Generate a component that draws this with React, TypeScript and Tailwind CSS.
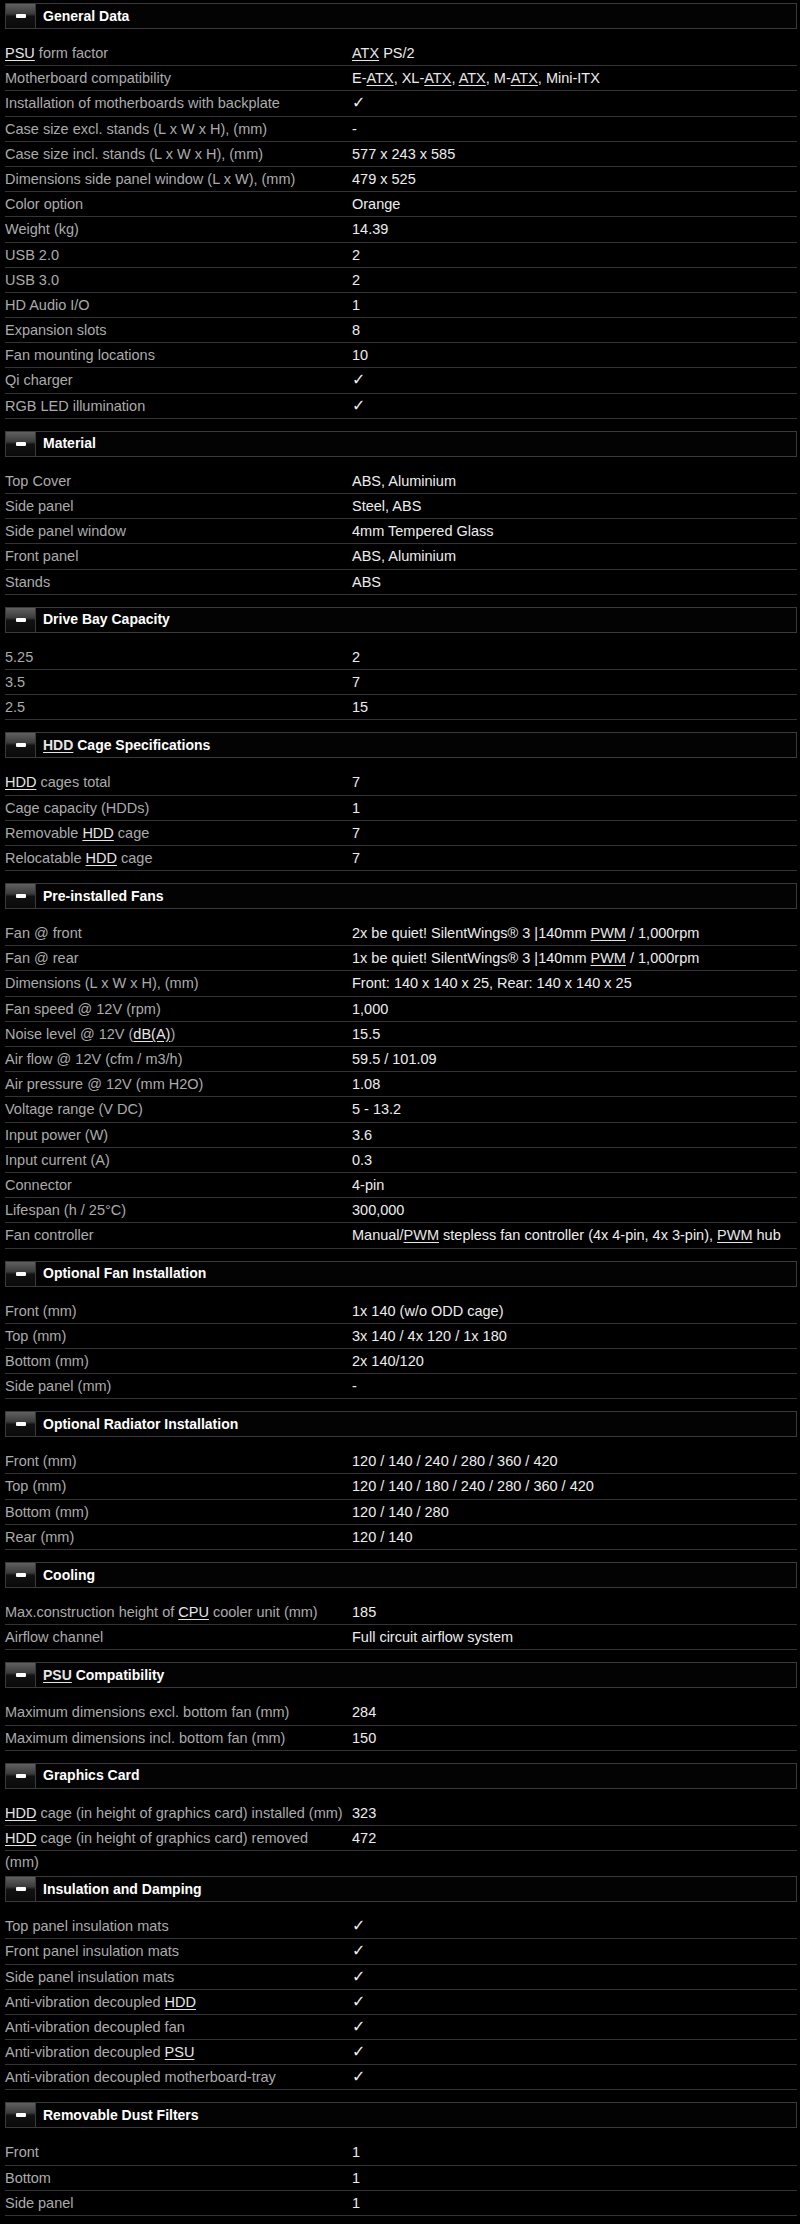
import React from 'react';

type Row = [string, string];
type Section = { title: string; rows: Row[]; extra?: boolean };

// [XYZ] marks an underlined abbreviation, \n forces a line break
const sections: Section[] = [
  {
    title: 'General Data',
    rows: [
      ['[PSU] form factor', '[ATX] PS/2'],
      ['Motherboard compatibility', 'E-[ATX], XL-[ATX], [ATX], M-[ATX], Mini-ITX'],
      ['Installation of motherboards with backplate', '✓'],
      ['Case size excl. stands (L x W x H), (mm)', '-'],
      ['Case size incl. stands (L x W x H), (mm)', '577 x 243 x 585'],
      ['Dimensions side panel window (L x W), (mm)', '479 x 525'],
      ['Color option', 'Orange'],
      ['Weight (kg)', '14.39'],
      ['USB 2.0', '2'],
      ['USB 3.0', '2'],
      ['HD Audio I/O', '1'],
      ['Expansion slots', '8'],
      ['Fan mounting locations', '10'],
      ['Qi charger', '✓'],
      ['RGB LED illumination', '✓'],
    ],
  },
  {
    title: 'Material',
    rows: [
      ['Top Cover', 'ABS, Aluminium'],
      ['Side panel', 'Steel, ABS'],
      ['Side panel window', '4mm Tempered Glass'],
      ['Front panel', 'ABS, Aluminium'],
      ['Stands', 'ABS'],
    ],
  },
  {
    title: 'Drive Bay Capacity',
    rows: [
      ['5.25', '2'],
      ['3.5', '7'],
      ['2.5', '15'],
    ],
  },
  {
    title: '[HDD] Cage Specifications',
    rows: [
      ['[HDD] cages total', '7'],
      ['Cage capacity (HDDs)', '1'],
      ['Removable [HDD] cage', '7'],
      ['Relocatable [HDD] cage', '7'],
    ],
  },
  {
    title: 'Pre-installed Fans',
    rows: [
      ['Fan @ front', '2x be quiet! SilentWings® 3 |140mm [PWM] / 1,000rpm'],
      ['Fan @ rear', '1x be quiet! SilentWings® 3 |140mm [PWM] / 1,000rpm'],
      ['Dimensions (L x W x H), (mm)', 'Front: 140 x 140 x 25, Rear: 140 x 140 x 25'],
      ['Fan speed @ 12V (rpm)', '1,000'],
      ['Noise level @ 12V ([dB(A)])', '15.5'],
      ['Air flow @ 12V (cfm / m3/h)', '59.5 / 101.09'],
      ['Air pressure @ 12V (mm H2O)', '1.08'],
      ['Voltage range (V DC)', '5 - 13.2'],
      ['Input power (W)', '3.6'],
      ['Input current (A)', '0.3'],
      ['Connector', '4-pin'],
      ['Lifespan (h / 25°C)', '300,000'],
      ['Fan controller', 'Manual/[PWM] stepless fan controller (4x 4-pin, 4x 3-pin), [PWM] hub'],
    ],
  },
  {
    title: 'Optional Fan Installation',
    rows: [
      ['Front (mm)', '1x 140 (w/o ODD cage)'],
      ['Top (mm)', '3x 140 / 4x 120 / 1x 180'],
      ['Bottom (mm)', '2x 140/120'],
      ['Side panel (mm)', '-'],
    ],
  },
  {
    title: 'Optional Radiator Installation',
    rows: [
      ['Front (mm)', '120 / 140 / 240 / 280 / 360 / 420'],
      ['Top (mm)', '120 / 140 / 180 / 240 / 280 / 360 / 420'],
      ['Bottom (mm)', '120 / 140 / 280'],
      ['Rear (mm)', '120 / 140'],
    ],
  },
  {
    title: 'Cooling',
    rows: [
      ['Max.construction height of [CPU] cooler unit (mm)', '185'],
      ['Airflow channel', 'Full circuit airflow system'],
    ],
  },
  {
    title: '[PSU] Compatibility',
    rows: [
      ['Maximum dimensions excl. bottom fan (mm)', '284'],
      ['Maximum dimensions incl. bottom fan (mm)', '150'],
    ],
  },
  {
    title: 'Graphics Card',
    extra: true,
    rows: [
      ['[HDD] cage (in height of graphics card) installed (mm)', '323'],
      ['[HDD] cage (in height of graphics card) removed\n(mm)', '472'],
    ],
  },
  {
    title: 'Insulation and Damping',
    rows: [
      ['Top panel insulation mats', '✓'],
      ['Front panel insulation mats', '✓'],
      ['Side panel insulation mats', '✓'],
      ['Anti-vibration decoupled [HDD]', '✓'],
      ['Anti-vibration decoupled fan', '✓'],
      ['Anti-vibration decoupled [PSU]', '✓'],
      ['Anti-vibration decoupled motherboard-tray', '✓'],
    ],
  },
  {
    title: 'Removable Dust Filters',
    rows: [
      ['Front', '1'],
      ['Bottom', '1'],
      ['Side panel', '1'],
    ],
  },
];

function Rich({ text }: { text: string }) {
  const lines = text.split('\n');
  return (
    <span>
      {lines.map((line, li) => (
        <React.Fragment key={li}>
          {li > 0 && <br />}
          {line.split(/(\[[^\]]+\])/).map((part, i) =>
            part.startsWith('[') ? (
              <span key={i} className="text-[#e6e6e6] underline underline-offset-2">
                {part.slice(1, -1)}
              </span>
            ) : part === '✓' ? (
              <span key={i} className="text-[16px] font-bold">
                {part}
              </span>
            ) : (
              <span key={i}>{part}</span>
            )
          )}
        </React.Fragment>
      ))}
    </span>
  );
}

function Header({ title }: { title: string }) {
  return (
    <div className="flex h-[26px] border border-[#3a3a3a] bg-[#030303] mb-[12px]">
      <div className="w-[30px] border-r border-[#3a3a3a] flex items-center justify-center bg-[linear-gradient(to_bottom,#606060_0%,#3c3c3c_40%,#121212_52%,#0a0a0a_100%)]">
        <div className="w-[10px] h-[4px] rounded-[1px] bg-white" />
      </div>
      <div className="flex items-center pl-[7px] text-[14px] font-bold text-white">
        <Rich text={title} />
      </div>
    </div>
  );
}

export default function App() {
  return (
    <div
      className="min-h-screen bg-black pt-[3px] px-[5px] text-[14.5px]"
      style={{ fontFamily: '"Liberation Sans", Arial, "DejaVu Sans", sans-serif' }}
    >
      <div className="w-[792px]">
        {sections.map((s) => (
          <div key={s.title} className={s.extra ? 'mb-[25px]' : 'mb-[12px]'}>
            <Header title={s.title} />
            {s.rows.map(([label, value], i) => (
              <div key={i} className="flex h-[25.2px] border-b border-[#333]">
                <div className="w-[347px] shrink-0 leading-[24.2px] text-[#ababab]">
                  <Rich text={label} />
                </div>
                <div className="flex-1 leading-[24.2px] text-[#ededed]">
                  <Rich text={value} />
                </div>
              </div>
            ))}
          </div>
        ))}
      </div>
    </div>
  );
}
